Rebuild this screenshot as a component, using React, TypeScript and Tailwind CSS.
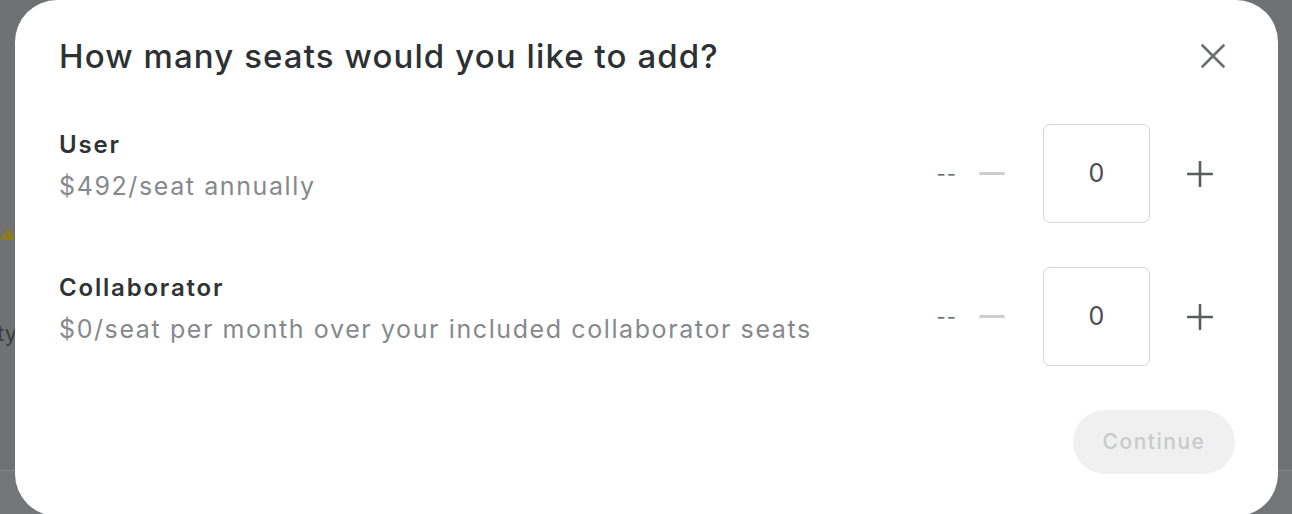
type Seat = {
  label: string;
  price: string;
};

const seats: Seat[] = [
  { label: "User", price: "$492/seat annually" },
  { label: "Collaborator", price: "$0/seat per month over your included collaborator seats" },
];

function Stepper() {
  return (
    <div className="flex items-center">
      <span className="text-[20px] leading-none tracking-[1px] text-[#6b6e70]">--</span>
      <button type="button" className="ml-[22px] flex h-[26px] w-[26px] items-center justify-center">
        <span className="block h-[3px] w-[26px] rounded-full bg-[#cbcdcf]" />
      </button>
      <div className="ml-[38px] flex h-[99px] w-[107px] items-center justify-center rounded-[7px] border border-[#d3d5d7] bg-white text-[25px] text-[#4a4d50]">
        0
      </div>
      <button type="button" className="ml-[37px] flex h-[26px] w-[26px] items-center justify-center text-[#5a5d60]">
        <svg width="26" height="26" viewBox="0 0 26 26" fill="none">
          <path d="M13 1v24M1 13h24" stroke="currentColor" strokeWidth="2.6" strokeLinecap="round" />
        </svg>
      </button>
    </div>
  );
}

export default function App() {
  return (
    <div
      className="relative h-[514px] w-full overflow-hidden bg-[#6f7173]"
      style={{ fontFamily: "Inter, 'Noto Sans', sans-serif" }}
    >
      {/* page behind the dimmed backdrop */}
      <div className="flex h-full flex-col">
        <div className="flex flex-1 flex-col pt-[226px]">
          <svg width="16" height="16" viewBox="0 0 16 16" className="-ml-[2px]">
            <path d="M2 14 L10 2 L18 14 Z" fill="#8a7c22" />
          </svg>
          <span className="mt-[80px] -ml-[3px] text-[22px] leading-none text-[#3c3e40]">ty</span>
        </div>
        <div className="h-[44px] border-t border-[#84868a] bg-[#737577]" />
      </div>

      <div className="absolute left-[15px] top-0 h-[516px] w-[1263px] rounded-[42px] bg-white pl-[44px] pr-[43px]">
        <div className="flex items-center justify-between pt-[34px] pr-[10px]">
          <h1 className="text-[33px] font-medium leading-[44px] tracking-[1.1px] text-[#2e3134]">
            How many seats would you like to add?
          </h1>
          <button type="button" className="text-[#6b6e70]">
            <svg width="24" height="24" viewBox="0 0 24 24" fill="none">
              <path d="M1.5 1.5l21 21M22.5 1.5l-21 21" stroke="currentColor" strokeWidth="2.6" strokeLinecap="round" />
            </svg>
          </button>
        </div>

        <div className="mt-[46px] flex flex-col gap-[44px] pr-[22px]">
          {seats.map((s) => (
            <div key={s.label} className="flex items-start justify-between">
              <div className="mt-[6px] flex flex-col gap-[11px]">
                <p className="text-[24px] font-semibold leading-[30px] tracking-[1.8px] text-[#2f3336]">{s.label}</p>
                <p className="text-[25px] leading-[30px] tracking-[1.6px] text-[#86898c]">{s.price}</p>
              </div>
              <Stepper />
            </div>
          ))}
        </div>

        <div className="mt-[44px] flex justify-end">
          <button
            type="button"
            disabled
            className="h-[64px] w-[162px] rounded-full bg-[#f0f0f0] text-[21px] font-medium tracking-[1.5px] text-[#c9cacb]"
          >
            Continue
          </button>
        </div>
      </div>
    </div>
  );
}
